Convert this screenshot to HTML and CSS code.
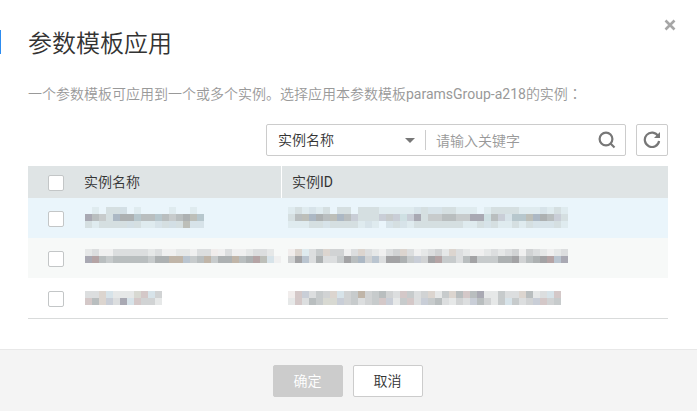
FILE: index.html
```html
<!DOCTYPE html>
<html lang="zh-CN">
<head>
<meta charset="utf-8">
<title>参数模板应用</title>
<link rel="stylesheet" href="styles.css">
</head>
<body>
<main class="dialog">
  <button class="close" aria-label="关闭"><svg width="12" height="12" viewBox="0 0 12 12"><path d="M1.5 1.5l9 9M10.5 1.5l-9 9"/></svg></button>
  <h1 class="title">参数模板应用</h1>
  <p class="hint">一个参数模板可应用到一个或多个实例。选择应用本参数模板<span class="latin">paramsGroup-a218</span>的实例<span class="colon" lang="zh-TW">：</span></p>
  <div class="toolbar">
    <div class="search">
      <div class="select"><span>实例名称</span><i class="caret"></i></div>
      <span class="placeholder">请输入关键字</span>
      <svg class="icon" width="18" height="18" viewBox="0 0 18 18"><circle cx="8" cy="8" r="6.4"/><path d="M12.5 12.5l4 4"/></svg>
    </div>
    <button class="refresh" aria-label="刷新"><svg class="icon" width="18" height="18" viewBox="0 0 18 18"><path d="M15.2 5.1A7.2 7.2 0 1 0 16.1 10"/><path class="solid" d="M17 1v6h-6z"/></svg></button>
  </div>
  <div class="table">
    <div class="row head"><i class="check"></i><span class="name">实例名称</span><span class="id">实例<span class="latin">ID</span></span></div>
    <div class="row hover"><i class="check"></i><div class="name mosaic" data-row="0"></div><div class="id mosaic" data-row="1"></div></div>
    <div class="row alt"><i class="check"></i><div class="name mosaic" data-row="2"></div><div class="id mosaic" data-row="3"></div></div>
    <div class="row last"><i class="check"></i><div class="name mosaic" data-row="4"></div><div class="id mosaic" data-row="5"></div></div>
  </div>
  <footer class="footer"><button class="btn primary">确定</button><button class="btn">取消</button></footer>
</main>
<script src="mosaic.js"></script>
</body>
</html>
```
FILE: styles.css
```css
* { box-sizing: border-box; }
body { margin: 0; background: #fff; color: #333; font: 350 14px/20px Roboto, "Noto Sans CJK SC", sans-serif; }
button { font: inherit; padding: 0; }
.latin { font-weight: 400; }
.dialog { position: relative; display: flex; flex-direction: column; height: 411px; overflow: hidden; }
.dialog::before { content: ""; position: absolute; left: 0; top: 30px; width: 1px; height: 24px; background: #2d8cf0; }
.close { position: absolute; left: 664px; top: 19px; width: 12px; height: 12px; border: 0; background: none; }
.close svg { display: block; fill: none; stroke: #a6a6a6; stroke-width: 2.6; }
.title { margin: 26px 28px 0; font-size: 24px; line-height: 36px; font-weight: 350; }
.hint { margin: 22px 28px 0; color: #999; white-space: nowrap; }
.colon { font-family: "Noto Sans CJK TC", sans-serif; line-height: 1; }
.toolbar { display: flex; justify-content: flex-end; gap: 10px; margin: 20px 29px 0; height: 32px; }
.search { display: flex; align-items: center; width: 360px; border: 1px solid #ccc; border-radius: 2px; padding-right: 9px; }
.select { display: flex; align-items: center; justify-content: space-between; width: 159px; height: 20px; padding: 0 10px 0 11px; border-right: 1px solid #ccc; }
.caret { border: 5px solid transparent; border-top-color: #777; border-bottom: 0; }
.placeholder { flex: 1; padding: 1px 0 0 10px; color: #999; }
.icon { display: block; fill: none; stroke: #777; stroke-width: 2.2; }
.icon .solid { fill: #777; stroke: none; }
.refresh { display: grid; place-items: center; width: 32px; border: 1px solid #ccc; border-radius: 2px; background: #fff; }
.table { margin: 10px 29px 0 28px; border-bottom: 1px solid #d9dbdb; }
.row { display: grid; grid-template-columns: 56px 197px 1fr; align-items: center; height: 40px; }
.head { height: 32px; background: #dfe4e5; }
.head .id { display: flex; align-items: center; height: 32px; border-left: 1px solid #fff; padding-left: 10px; }
.check { width: 16px; height: 16px; margin: 2px 0 0 20px; background: #fff; border: 1px solid #c3c6c7; border-radius: 2px; }
.hover { background: #eaf5fb; }
.alt { background: #f7f9f8; }
.mosaic { display: grid; grid-auto-rows: 7px; align-self: start; margin-left: 1px; }
.id.mosaic { margin-left: 7px; }
.hover .mosaic { margin-top: 9px; }
.alt .mosaic { margin-top: 11px; }
.last .mosaic { margin-top: 13px; }
.footer { display: flex; justify-content: center; gap: 10px; margin-top: 30px; padding: 15px 2px 0 0; height: 62px; background: #f4f4f4; border-top: 1px solid #e8e8e8; }
.btn { width: 70px; height: 32px; border: 1px solid #ccc; border-radius: 2px; background: #fff; color: #333; }
.btn.primary { background: #ccc; color: #fff; }
```
FILE: mosaic.js
```js
// Each entry holds the lines of one redacted value; '.' leaves a cell clear.
const palette = {
  a: '#a3a3a5', b: '#adb1b2', c: '#b9bebf', d: '#c7cbcc', e: '#d1d3d4', f: '#dcdedf', g: '#e6e8e8', h: '#f0f0f0',
  B: '#a9a9b3', C: '#b7c7cd', D: '#c9ced7', E: '#cfe0e3', F: '#d7e3e9', G: '#dfebef', L: '#acb8c4', M: '#d5dfe1',
  P: '#d4c8c8', Q: '#b5a4a5', R: '#c0b5a8', S: '#dcd5cf', T: '#bdbfb9', U: '#bac5d0', V: '#d8d9d2', W: '#d3dfe5', X: '#f1edec'
};
const values = [
  ['.G.MMW.G....G..G.', 'BcdMLbbCccCcdcbTC', 'MGMMMMWMGGFMWMTFF'],
  ['GMGFGM.MM.MMMGGGGGFMFFMMGGG.GMMMMGGGFGMG', 'McTLbcTLcDMMMDdDEDBMddccddBBEcDFCCTLbcDM', 'GGGMMFMMMMGFG.FMFGMMMMMMMGGMFMGGMGMFFFMG'],
  ['gfhhfffffgfhhgghffXhfhhgffg', 'BQcdcccccdbbRRUdcRdbbRcbQTFh'],
  ['XSGfdSeehfSfghfeSfhgfegSfghhgfgfehefghgf', 'eaUfbffdacLeUfaabdDeaQddfcadddbbaecbaQUB'],
  ['ffSFgggVPFef', 'PcSDfBFPeeg'].map(line => line.slice(0, 11)),
  ['XPDfdeSFedRedcefPdfeSgdScPcBggdffScgfFPc', 'gPfcdVVDedfedPDgdPfDdcfgefDcegdFdfeDPed'].map(line => line.slice(0, 39))
];
document.querySelectorAll('.mosaic').forEach(box => {
  const lines = values[Number(box.dataset.row)];
  const columns = Math.max(...lines.map(line => line.length));
  box.style.gridTemplateColumns = `repeat(${columns}, 7px)`;
  lines.forEach(line => [...line.padEnd(columns, '.')].forEach(code => {
    const cell = document.createElement('i');
    cell.style.background = palette[code] || 'transparent';
    box.append(cell);
  }));
});
```
